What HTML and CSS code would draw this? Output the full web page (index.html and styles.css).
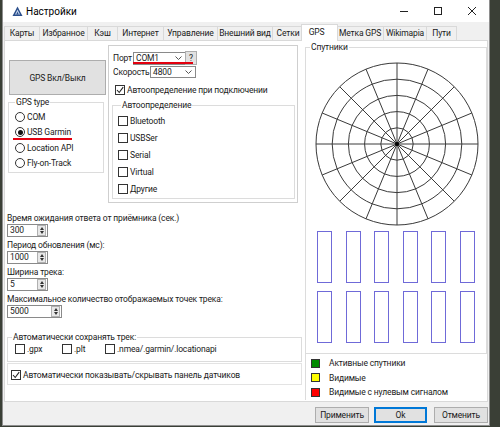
FILE: index.html
```html
<!DOCTYPE html>
<html lang="ru">
<head>
    <meta charset="UTF-8">
    <title>Настройки</title>
    <link rel="stylesheet" href="styles.css">
</head>
<body>
<div class="window">
    <!-- title bar -->
    <div class="titlebar">
        <svg class="app-icon" width="11" height="11" viewBox="0 0 11 11">
            <path d="M5.5 0.5 L10.5 10 L0.5 10 Z" fill="#2b4f8c"/>
            <path d="M5.5 3.5 L8 8.5 L3 8.5 Z" fill="#c9d8ee"/>
            <path d="M5.5 5.5 L6.8 8.5 L4.2 8.5 Z" fill="#2b4f8c"/>
        </svg>
        <span class="title">Настройки</span>
        <div class="controls">
            <span><svg width="8" height="8"><path d="M0 4.5H8" stroke="#222"/></svg></span>
            <span><svg width="8" height="8"><rect x="0.5" y="0.5" width="7" height="7" fill="none" stroke="#222"/></svg></span>
            <span><svg width="8" height="8"><path d="M0 0L8 8M8 0L0 8" stroke="#222"/></svg></span>
        </div>
    </div>

    <!-- tabs -->
    <div class="tabs">
        <div class="tab">Карты</div>
        <div class="tab">Избранное</div>
        <div class="tab">Кэш</div>
        <div class="tab">Интернет</div>
        <div class="tab">Управление</div>
        <div class="tab">Внешний вид</div>
        <div class="tab">Сетки</div>
        <div class="tab active">GPS</div>
        <div class="tab">Метка GPS</div>
        <div class="tab">Wikimapia</div>
        <div class="tab">Пути</div>
    </div>

    <div class="page">
        <div class="left-col">
            <div class="top-row">
                <div class="gps-col">
                    <button class="gps-btn">GPS Вкл/Выкл</button>
                    <div class="group gps-type">
                        <span class="group-title">GPS type</span>
                        <div class="opt"><span class="rb"></span>COM</div>
                        <div class="opt marked"><span class="rb on"></span>USB Garmin</div>
                        <div class="opt"><span class="rb"></span>Location API</div>
                        <div class="opt"><span class="rb"></span>Fly-on-Track</div>
                    </div>
                </div>

                <div class="port-panel">
                    <div class="port-row">
                        <span class="lbl port-lbl">Порт</span>
                        <div class="combo port-combo">COM1<svg class="chev" width="7" height="4"><path d="M0.5 0.5L3.5 3.5L6.5 0.5" fill="none" stroke="#555"/></svg></div>
                        <button class="help-btn">?</button>
                        <span class="red-mark port-mark"></span>
                    </div>
                    <div class="port-row">
                        <span class="lbl speed-lbl">Скорость</span>
                        <div class="combo speed-combo">4800<svg class="chev" width="7" height="4"><path d="M0.5 0.5L3.5 3.5L6.5 0.5" fill="none" stroke="#555"/></svg></div>
                    </div>
                    <div class="opt auto-connect"><span class="cb checked"><svg width="8" height="8"><path d="M1 4L3.2 6.5L7.2 1.2" fill="none" stroke="#222" stroke-width="1.1"/></svg></span>Автоопределение при подключении</div>

                    <div class="group autodetect">
                        <span class="group-title">Автоопределение</span>
                        <div class="opt"><span class="cb"></span>Bluetooth</div>
                        <div class="opt"><span class="cb"></span>USBSer</div>
                        <div class="opt"><span class="cb"></span>Serial</div>
                        <div class="opt"><span class="cb"></span>Virtual</div>
                        <div class="opt"><span class="cb"></span>Другие</div>
                    </div>
                </div>
            </div>

            <div class="fields">
                <div class="field-label">Время ожидания ответа от приёмника (сек.)</div>
                <div class="spin">300<span class="spin-btn"><i class="up"></i><i class="down"></i></span></div>
                <div class="field-label">Период обновления (мс):</div>
                <div class="spin">1000<span class="spin-btn"><i class="up"></i><i class="down"></i></span></div>
                <div class="field-label">Ширина трека:</div>
                <div class="spin">5<span class="spin-btn"><i class="up"></i><i class="down"></i></span></div>
                <div class="field-label">Максимальное количество отображаемых точек трека:</div>
                <div class="spin wide">5000<span class="spin-btn"><i class="up"></i><i class="down"></i></span></div>
            </div>

            <div class="group autosave">
                <span class="group-title">Автоматически сохранять трек:</span>
                <div class="save-row">
                    <div class="opt"><span class="cb"></span>.gpx</div>
                    <div class="opt"><span class="cb"></span>.plt</div>
                    <div class="opt"><span class="cb"></span>.nmea/.garmin/.locationapi</div>
                </div>
            </div>

            <div class="autoshow">
                <div class="opt"><span class="cb checked"><svg width="8" height="8"><path d="M1 4L3.2 6.5L7.2 1.2" fill="none" stroke="#222" stroke-width="1.1"/></svg></span>Автоматически показывать/скрывать панель датчиков</div>
            </div>
        </div>

        <div class="right-col">
            <div class="group sats">
                <span class="group-title">Спутники</span>
                <svg class="sky" width="166" height="166" viewBox="0 0 166 166">
                    <g fill="none" stroke="#3a3a3a" stroke-width="1">
                        <circle cx="83" cy="83" r="81"/>
                        <circle cx="83" cy="83" r="64.8"/>
                        <circle cx="83" cy="83" r="48.6"/>
                        <circle cx="83" cy="83" r="32.4"/>
                        <circle cx="83" cy="83" r="16.2"/>
                        <path d="M2 83H164M83 2V164"/>
                        <path d="M8.17 52L157.83 114M8.17 114L157.83 52"/>
                        <path d="M25.72 25.72L140.28 140.28M25.72 140.28L140.28 25.72"/>
                        <path d="M52 8.17L114 157.83M114 8.17L52 157.83"/>
                    </g>
                    <circle cx="83" cy="83" r="2" fill="#000"/>
                </svg>
                <div class="bars">
                    <span></span><span></span><span></span><span></span><span></span><span></span>
                    <span></span><span></span><span></span><span></span><span></span><span></span>
                </div>
            </div>
            <div class="legend">
                <div class="legend-row"><span class="swatch green"></span>Активные спутники</div>
                <div class="legend-row"><span class="swatch yellow"></span>Видимые</div>
                <div class="legend-row"><span class="swatch red"></span>Видимые с нулевым сигналом</div>
            </div>
        </div>
    </div>

    <div class="footer">
        <button class="btn">Применить</button>
        <button class="btn default">Ok</button>
        <button class="btn">Отменить</button>
    </div>
</div>
</body>
</html>
```

FILE: styles.css
```css
* {
    box-sizing: border-box;
}
body {
    margin: 0;
    height: 427px;
    overflow: hidden;
    background: #3a3f36;
    font-family: Roboto, "Liberation Sans", Arial, sans-serif;
    font-size: 8.5px;
    letter-spacing: -0.15px;
    color: #1a1a1a;
}
button {
    font-family: inherit;
    font-size: 8.5px;
    letter-spacing: inherit;
    color: #1a1a1a;
    padding: 0;
}

/* window frame */
.window {
    width: 488px;
    height: 426px;
    margin-left: 2px;
    background: #f0f0f0;
    border: 1px solid #8e8e8e;
    border-top: 0;
}
.titlebar {
    height: 22px;
    background: #fff;
    display: flex;
    align-items: center;
}
.app-icon {
    margin-left: 9px;
}
.title {
    margin-left: 3px;
    font-size: 10px;
    letter-spacing: 0;
    color: #000;
}
.controls {
    margin-left: auto;
    display: flex;
}
.controls span {
    width: 34px;
    height: 22px;
    display: flex;
    align-items: center;
    justify-content: center;
}

/* tabs */
.tabs {
    height: 18px;
    display: flex;
    align-items: flex-end;
    padding-left: 1px;
}
.tab {
    height: 14px;
    line-height: 13px;
    margin-right: -1px;
    text-align: center;
    white-space: nowrap;
    border: 1px solid #d9d9d9;
    border-bottom: 0;
    background: #f0f0f0;
}
.tab:nth-child(1) { width: 36px; }
.tab:nth-child(2) { width: 49px; }
.tab:nth-child(3) { width: 31px; }
.tab:nth-child(4) { width: 47px; }
.tab:nth-child(5) { width: 55px; }
.tab:nth-child(6) { width: 56px; }
.tab:nth-child(7) { width: 32px; }
.tab:nth-child(9) { width: 48px; }
.tab:nth-child(10) { width: 44px; }
.tab:nth-child(11) { width: 31px; }
.tab.active {
    width: 37px;
    height: 17px;
    line-height: 15px;
    margin: 0 -2px -1px -2px;
    padding-right: 6px;
    background: #fff;
    position: relative;
    z-index: 1;
}

.page {
    height: 362px;
    margin: 0 1px;
    background: #fff;
    border: 1px solid #d9d9d9;
    display: flex;
}

/* group boxes */
.group {
    border: 1px solid #dcdcdc;
}
.group-title {
    display: block;
    width: fit-content;
    height: 12px;
    line-height: 12px;
    margin: -7px 0 0 4px;
    padding: 0 1px;
    background: #fff;
}

/* check boxes and radios */
.opt {
    display: flex;
    align-items: center;
    height: 15px;
    white-space: nowrap;
}
.cb, .rb {
    width: 10px;
    height: 10px;
    margin-right: 2px;
    border: 1px solid #333;
    background: #fff;
    display: flex;
    align-items: center;
    justify-content: center;
    flex: none;
}
.rb {
    border-radius: 50%;
}
.rb.on::after {
    content: "";
    width: 5px;
    height: 5px;
    border-radius: 50%;
    background: #111;
}

/* left column */
.left-col {
    width: 297px;
    margin-left: 2px;
}
.top-row {
    display: flex;
    height: 158px;
    margin-top: 4px;
}
.gps-col {
    width: 101px;
}
.gps-btn {
    display: block;
    width: 97px;
    height: 35px;
    margin: 15px 0 0 2px;
    background: #e1e1e1;
    border: 1px solid #adadad;
}
.gps-type {
    width: 96px;
    height: 71px;
    margin: 7px 0 0 1px;
    padding-left: 6px;
}
.gps-type .opt {
    height: 15.5px;
}
.gps-type .group-title {
    margin-left: 0;
    margin-bottom: 1px;
}
.marked {
    position: relative;
}
.red-mark, .marked::after {
    position: absolute;
    height: 2px;
    background: #e3000f;
}
.marked::after {
    content: "";
    left: -2px;
    top: 13px;
    width: 59px;
}

.port-panel {
    width: 190px;
    height: 158px;
    border: 1px solid #cfcfcf;
    padding: 5px 0 0 4px;
}
.port-row {
    display: flex;
    align-items: center;
    height: 14px;
    position: relative;
}
.port-row + .port-row {
    margin-top: 1px;
    height: 12px;
}
.port-lbl {
    width: 20px;
}
.speed-lbl {
    width: 37px;
}
.combo {
    height: 13px;
    border: 1px solid #8a8a8a;
    padding-left: 2px;
    display: flex;
    align-items: center;
    justify-content: space-between;
    background: #fff;
}
.port-combo {
    width: 53px;
}
.speed-combo {
    width: 46px;
    height: 12px;
}
.chev {
    margin-right: 3px;
}
.help-btn {
    width: 12px;
    height: 14px;
    margin-left: -1px;
    background: #e1e1e1;
    border: 1px solid #adadad;
    line-height: 10px;
}
.port-mark {
    left: 20px;
    top: 11px;
    width: 60px;
}
.auto-connect {
    margin-top: 5px;
    margin-left: 2px;
    height: 13px;
}
.autodetect {
    width: 183px;
    height: 94px;
    margin: 9px 0 0 -1px;
    padding-left: 5px;
}
.autodetect .group-title {
    margin-left: 3px;
    margin-bottom: 1px;
}
.autodetect .opt {
    height: 17px;
}

.fields {
    margin-top: 9px;
}
.field-label {
    height: 12px;
    line-height: 12px;
    margin-top: 2px;
}
.field-label:first-child {
    margin-top: 0;
}
.spin {
    width: 41px;
    height: 13px;
    border: 1px solid #8a8a8a;
    padding-left: 2px;
    line-height: 11px;
    display: flex;
    justify-content: space-between;
}
.spin.wide {
    width: 55px;
}
.spin-btn {
    width: 9px;
    height: 11px;
    margin-right: 1px;
    background: #e8e8e8;
    border: 1px solid #b0b0b0;
    display: flex;
    flex-direction: column;
    align-items: center;
    justify-content: center;
    gap: 1px;
}
.spin-btn i {
    width: 0;
    height: 0;
    border-left: 2.5px solid transparent;
    border-right: 2.5px solid transparent;
}
.spin-btn .up {
    border-bottom: 3px solid #333;
}
.spin-btn .down {
    border-top: 3px solid #333;
}

.autosave {
    width: 295px;
    height: 25px;
    margin-top: 19px;
}
.save-row {
    display: flex;
    padding-left: 7px;
}
.save-row .opt {
    height: 12px;
}
.save-row .opt:nth-child(1) {
    width: 47px;
}
.save-row .opt:nth-child(2) {
    width: 43px;
}
.autoshow {
    width: 295px;
    height: 22px;
    margin-top: 1px;
    border: 1px solid #e3e3e3;
    padding: 3px 0 0 3px;
}

/* right column */
.right-col {
    width: 182px;
    margin-left: 1px;
}
.sats {
    height: 307px;
    margin-top: 6px;
}
.sats .group-title {
    margin-left: 4px;
}
.sky {
    display: block;
    margin: 8px 0 0 8px;
}
.bars {
    display: grid;
    grid-template-columns: repeat(6, 15px);
    column-gap: 13.6px;
    row-gap: 8px;
    margin: 4px 0 0 11px;
}
.bars span {
    height: 52px;
    border: 1px solid #6f6ad8;
}
.legend {
    height: 46px;
    border-left: 1px solid #dcdcdc;
    padding: 2px 0 0 5px;
}
.legend-row {
    display: flex;
    align-items: center;
    height: 14.5px;
}
.swatch {
    width: 9px;
    height: 9px;
    margin-right: 9px;
    border: 1px solid #333;
}
.green { background: #008a00; }
.yellow { background: #ffff00; }
.red { background: #ff0000; }

/* bottom buttons */
.footer {
    display: flex;
    justify-content: flex-end;
    padding: 5px 1px 0 0;
    gap: 5px;
}
.btn {
    width: 54px;
    height: 16px;
    background: #e1e1e1;
    border: 1px solid #adadad;
}
.btn.default {
    width: 53px;
    border: 1px solid #0078d7;
    box-shadow: inset 0 0 0 1px #0078d7;
    margin-right: 2px;
}
```
